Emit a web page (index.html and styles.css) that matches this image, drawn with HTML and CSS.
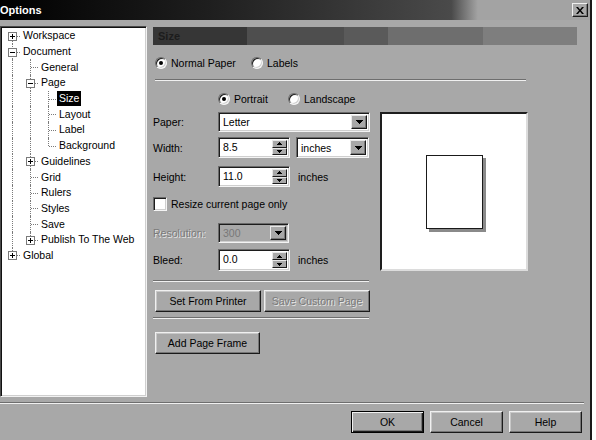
FILE: index.html
```html
<!DOCTYPE html>
<html>
<head>
<meta charset="utf-8">
<title>Options</title>
<link rel="stylesheet" href="styles.css">
</head>
<body>
<div class="window">
  <div class="titlebar">
    <span class="title">Options</span>
    <span class="close"><svg width="8" height="7" viewBox="0 0 8 7"><path d="M0 0h2l2 2.5L6 0h2L5 3.5 8 7H6L4 4.5 2 7H0l3-3.5z" fill="#000"/></svg></span>
  </div>
  <div class="main">
    <div class="tree">
      <div class="row"><span class="g tee first"><svg class="box" viewBox="0 0 9 9"><rect x=".5" y=".5" width="8" height="8" fill="#fff" stroke="#7a7a7a"/><path d="M2 4.5h5M4.5 2v5" stroke="#000"/></svg></span><span class="lbl">Workspace</span></div>
      <div class="row"><span class="g tee"><svg class="box" viewBox="0 0 9 9"><rect x=".5" y=".5" width="8" height="8" fill="#fff" stroke="#7a7a7a"/><path d="M2 4.5h5" stroke="#000"/></svg></span><span class="lbl">Document</span></div>
      <div class="row"><span class="g v"></span><span class="g tee"></span><span class="lbl">General</span></div>
      <div class="row"><span class="g v"></span><span class="g tee"><svg class="box" viewBox="0 0 9 9"><rect x=".5" y=".5" width="8" height="8" fill="#fff" stroke="#7a7a7a"/><path d="M2 4.5h5" stroke="#000"/></svg></span><span class="lbl">Page</span></div>
      <div class="row"><span class="g v"></span><span class="g v"></span><span class="g tee"></span><span class="lbl sel">Size</span></div>
      <div class="row"><span class="g v"></span><span class="g v"></span><span class="g tee"></span><span class="lbl">Layout</span></div>
      <div class="row"><span class="g v"></span><span class="g v"></span><span class="g tee"></span><span class="lbl">Label</span></div>
      <div class="row"><span class="g v"></span><span class="g v"></span><span class="g tee end"></span><span class="lbl">Background</span></div>
      <div class="row"><span class="g v"></span><span class="g tee"><svg class="box" viewBox="0 0 9 9"><rect x=".5" y=".5" width="8" height="8" fill="#fff" stroke="#7a7a7a"/><path d="M2 4.5h5M4.5 2v5" stroke="#000"/></svg></span><span class="lbl">Guidelines</span></div>
      <div class="row"><span class="g v"></span><span class="g tee"></span><span class="lbl">Grid</span></div>
      <div class="row"><span class="g v"></span><span class="g tee"></span><span class="lbl">Rulers</span></div>
      <div class="row"><span class="g v"></span><span class="g tee"></span><span class="lbl">Styles</span></div>
      <div class="row"><span class="g v"></span><span class="g tee"></span><span class="lbl">Save</span></div>
      <div class="row"><span class="g v"></span><span class="g tee end"><svg class="box" viewBox="0 0 9 9"><rect x=".5" y=".5" width="8" height="8" fill="#fff" stroke="#7a7a7a"/><path d="M2 4.5h5M4.5 2v5" stroke="#000"/></svg></span><span class="lbl">Publish To The Web</span></div>
      <div class="row"><span class="g tee end"><svg class="box" viewBox="0 0 9 9"><rect x=".5" y=".5" width="8" height="8" fill="#fff" stroke="#7a7a7a"/><path d="M2 4.5h5M4.5 2v5" stroke="#000"/></svg></span><span class="lbl">Global</span></div>
    </div>

    <div class="page">
      <div class="header">Size</div>

      <div class="radios first-radios">
        <label class="ritem w-normal"><span class="radio on"></span><span class="rtext">Normal Paper</span></label>
        <label class="ritem"><span class="radio"></span><span class="rtext">Labels</span></label>
      </div>
      <div class="hr hr-top"></div>

      <div class="radios orient">
        <label class="ritem w-portrait"><span class="radio on"></span><span class="rtext">Portrait</span></label>
        <label class="ritem"><span class="radio"></span><span class="rtext">Landscape</span></label>
      </div>

      <div class="body">
        <div class="form">
          <div class="frow r-paper">
            <span class="label">Paper:</span>
            <div class="combo c-paper"><span class="ctext">Letter</span><span class="drop"><svg width="7" height="4" viewBox="0 0 7 4"><path d="M0 0h7v1H6v1H5v1H4v1H3V3H2V2H1V1H0z" fill="#000"/></svg></span></div>
          </div>
          <div class="frow r-width">
            <span class="label">Width:</span>
            <div class="spin"><span class="ctext">8.5</span><span class="spinbtns"><span class="sb"><svg width="5" height="3" viewBox="0 0 5 3"><path d="M2 0h1v1h1v1h1v1H0V2h1V1h1z" fill="#000"/></svg></span><span class="sb"><svg width="5" height="3" viewBox="0 0 5 3"><path d="M0 0h5v1H4v1H3v1H2V2H1V1H0z" fill="#000"/></svg></span></span></div>
            <div class="combo c-units"><span class="ctext">inches</span><span class="drop"><svg width="7" height="4" viewBox="0 0 7 4"><path d="M0 0h7v1H6v1H5v1H4v1H3V3H2V2H1V1H0z" fill="#000"/></svg></span></div>
          </div>
          <div class="frow r-height">
            <span class="label">Height:</span>
            <div class="spin"><span class="ctext">11.0</span><span class="spinbtns"><span class="sb"><svg width="5" height="3" viewBox="0 0 5 3"><path d="M2 0h1v1h1v1h1v1H0V2h1V1h1z" fill="#000"/></svg></span><span class="sb"><svg width="5" height="3" viewBox="0 0 5 3"><path d="M0 0h5v1H4v1H3v1H2V2H1V1H0z" fill="#000"/></svg></span></span></div>
            <span class="unit">inches</span>
          </div>
          <label class="frow r-check">
            <span class="checkbox"></span><span class="ctxt">Resize current page only</span>
          </label>
          <div class="frow r-res">
            <span class="label disabled">Resolution:</span>
            <div class="combo c-res off"><span class="ctext">300</span><span class="drop"><svg width="7" height="4" viewBox="0 0 7 4"><path d="M0 0h7v1H6v1H5v1H4v1H3V3H2V2H1V1H0z" fill="#000"/></svg></span></div>
          </div>
          <div class="frow r-bleed">
            <span class="label">Bleed:</span>
            <div class="spin"><span class="ctext">0.0</span><span class="spinbtns"><span class="sb"><svg width="5" height="3" viewBox="0 0 5 3"><path d="M2 0h1v1h1v1h1v1H0V2h1V1h1z" fill="#000"/></svg></span><span class="sb"><svg width="5" height="3" viewBox="0 0 5 3"><path d="M0 0h5v1H4v1H3v1H2V2H1V1H0z" fill="#000"/></svg></span></span></div>
            <span class="unit">inches</span>
          </div>
          <div class="hr hr-form1"></div>
          <div class="frow r-btns">
            <span class="btn b-wide">Set From Printer</span>
            <span class="btn b-wide b-second disabled">Save Custom Page</span>
          </div>
          <div class="hr hr-form2"></div>
          <div class="frow r-frame">
            <span class="btn b-frame">Add Page Frame</span>
          </div>
        </div>
        <div class="preview">
          <div class="sheet"></div>
        </div>
      </div>
    </div>
  </div>
  <div class="hr hr-full"></div>
  <div class="footer">
    <span class="btn b-dlg b-default">OK</span>
    <span class="btn b-dlg">Cancel</span>
    <span class="btn b-dlg">Help</span>
  </div>
</div>
</body>
</html>
```

FILE: styles.css
```css
* { box-sizing: border-box; }
html, body { margin: 0; padding: 0; }
body {
  background: #fff;
  width: 596px;
  height: 440px;
  overflow: hidden;
  font-family: "Liberation Sans", Arial, sans-serif;
  font-size: 10.5px;
  color: #000;
}
.window {
  width: 592px;
  height: 440px;
  background: #a8a8a8;
  border-right: 2px solid #1a1a1a;
  display: flex;
  flex-direction: column;
}

/* title bar */
.titlebar {
  height: 20px;
  flex: none;
  display: flex;
  align-items: center;
  justify-content: space-between;
  padding-right: 2px;
  background: linear-gradient(to right, #000 0%, #1e1e1e 35%, #4a4a4a 76.5%, #a3a3a3 81%, #a3a3a3 100%);
}
.title {
  color: #fff;
  font-weight: bold;
  font-size: 11px;
  margin-left: 0;
}
.close {
  width: 16px;
  height: 14px;
  background: #a8a8a8;
  border: 1px solid;
  border-color: #f0f0f0 #1a1a1a #1a1a1a #f0f0f0;
  box-shadow: inset -1px -1px #777;
  display: flex;
  align-items: center;
  justify-content: center;
}

/* main area */
.main {
  display: flex;
  height: 377px;
  padding-top: 6px;
  flex: none;
}

/* tree */
.tree {
  width: 147px;
  height: 371px;
  flex: none;
  background: #fff;
  border: 1px solid;
  border-color: #4a4a4a #f2f2f2 #f2f2f2 #4a4a4a;
  box-shadow: inset 1px 1px #111, inset -1px -1px #cfcfcf;
  padding: 1px 0 0 2px;
}
.row {
  display: flex;
  height: 15.7px;
}
.g {
  width: 18px;
  flex: none;
  position: relative;
}
.g.v::before,
.g.tee::before {
  content: "";
  position: absolute;
  left: 9px;
  top: 0;
  bottom: 0;
  border-left: 1px dotted #7a7a7a;
}
.g.tee.end::before { bottom: 50%; }
.g.tee.first::before { top: 50%; }
.g.tee::after {
  content: "";
  position: absolute;
  left: 10px;
  right: 1px;
  top: 50%;
  border-top: 1px dotted #7a7a7a;
}
.box {
  position: absolute;
  left: 5px;
  top: 50%;
  margin-top: -4px;
  width: 9px;
  height: 9px;
  z-index: 1;
}
.lbl {
  align-self: center;
  padding: 0 2px;
  line-height: 15px;
  white-space: nowrap;
}
.lbl.sel {
  background: #000;
  color: #fff;
}

/* right page */
.page {
  margin-left: 6px;
  width: 424px;
  display: flex;
  flex-direction: column;
}
.header {
  margin-top: 1px;
  height: 18px;
  flex: none;
  display: flex;
  align-items: center;
  padding-left: 5px;
  font-weight: bold;
  font-size: 11px;
  color: #1c1c1c;
  background: linear-gradient(to right,
    #363636 0%, #363636 22.2%,
    #4e4e4e 22.2%, #4e4e4e 45%,
    #5a5a5a 45%, #5a5a5a 55.4%,
    #6e6e6e 55.4%, #6e6e6e 77.8%,
    #7e7e7e 77.8%, #7e7e7e 100%);
}

.radios {
  display: flex;
  align-items: center;
  height: 14px;
  flex: none;
}
.first-radios { margin-top: 11px; padding-left: 2px; }
.orient { margin-top: 11px; padding-left: 65px; }
.ritem { display: flex; align-items: center; }
.w-normal { width: 96px; }
.w-portrait { width: 70px; }
.radio {
  width: 12px;
  height: 12px;
  border-radius: 50%;
  background: #fff;
  border: 1px solid;
  border-color: #6a6a6a #f4f4f4 #f4f4f4 #6a6a6a;
  box-shadow: inset 1px 1px #1c1c1c, inset -1px -1px #cfcfcf;
  display: flex;
  align-items: center;
  justify-content: center;
}
.radio.on::after {
  content: "";
  width: 4px;
  height: 4px;
  border-radius: 50%;
  background: #000;
}
.rtext { margin-left: 4px; white-space: nowrap; }

.hr {
  height: 2px;
  flex: none;
  border-top: 1px solid #6e6e6e;
  border-bottom: 1px solid #f0f0f0;
}
.hr-top { margin-top: 9px; margin-left: 2px; width: 371px; }

.body { display: flex; }
.form {
  width: 217px;
  flex: none;
  display: flex;
  flex-direction: column;
}
.frow { display: flex; align-items: center; flex: none; }
.label { width: 65px; flex: none; white-space: nowrap; }
.label.disabled, .btn.disabled {
  color: #7a7a7a;
  text-shadow: 1px 1px 0 #e6e6e6;
}
.r-paper { margin-top: 6px; height: 20px; }
.r-width { margin-top: 5px; height: 21px; }
.r-height { margin-top: 8px; height: 21px; }
.r-check { margin-top: 10px; height: 14px; }
.r-res { margin-top: 12px; height: 20px; }
.r-bleed { margin-top: 6px; height: 22px; }
.hr-form1 { margin-top: 9px; width: 216px; }
.r-btns { margin-top: 8px; height: 22px; padding-left: 2px; }
.hr-form2 { margin-top: 5px; width: 216px; }
.r-frame { margin-top: 13px; height: 22px; padding-left: 2px; }

.combo, .spin {
  height: 100%;
  display: flex;
  align-items: stretch;
  background: #fff;
  border: 1px solid;
  border-color: #6a6a6a #f4f4f4 #f4f4f4 #6a6a6a;
  box-shadow: inset 1px 1px #1c1c1c, inset -1px -1px #cfcfcf;
  padding: 2px;
}
.c-paper { width: 152px; }
.c-units { width: 73px; margin-left: 6px; }
.c-res { width: 71px; }
.combo.off { background: #a8a8a8; color: #787878; }
.spin { width: 72px; }
.ctext {
  flex: 1;
  padding-left: 2px;
  display: flex;
  align-items: center;
  white-space: nowrap;
}
.spin .ctext { align-items: flex-start; padding-top: 1px; }
.drop {
  width: 16px;
  flex: none;
  background: #a8a8a8;
  border: 1px solid;
  border-color: #e8e8e8 #1a1a1a #1a1a1a #e8e8e8;
  box-shadow: inset -1px -1px #777;
  display: flex;
  align-items: center;
  justify-content: center;
}
.spinbtns {
  width: 15px;
  flex: none;
  display: flex;
  flex-direction: column;
}
.sb {
  flex: 1;
  background: #a8a8a8;
  border: 1px solid;
  border-color: #e8e8e8 #1a1a1a #1a1a1a #e8e8e8;
  display: flex;
  align-items: center;
  justify-content: center;
}
.unit { margin-left: 8px; }

.checkbox {
  width: 14px;
  height: 14px;
  flex: none;
  background: #fff;
  border: 1px solid;
  border-color: #6a6a6a #f4f4f4 #f4f4f4 #6a6a6a;
  box-shadow: inset 1px 1px #1c1c1c, inset -1px -1px #cfcfcf;
}
.ctxt { margin-left: 4px; white-space: nowrap; }

.btn {
  height: 22px;
  display: flex;
  align-items: center;
  justify-content: center;
  background: #a8a8a8;
  border: 1px solid;
  border-color: #f0f0f0 #1a1a1a #1a1a1a #f0f0f0;
  box-shadow: inset -1px -1px #767676, inset 1px 1px #c8c8c8;
  white-space: nowrap;
}
.b-wide { width: 106px; }
.b-second { margin-left: 3px; }
.b-frame { width: 105px; }

.preview {
  width: 148px;
  height: 159px;
  flex: none;
  margin: 6px 0 0 10px;
  background: #fff;
  border: 2px solid;
  border-color: #1e1e1e #dcdcdc #dcdcdc #1e1e1e;
  display: flex;
  align-items: center;
  justify-content: center;
}
.sheet {
  width: 57px;
  height: 74px;
  background: #fff;
  border: 1px solid #1a1a1a;
  box-shadow: 3px 3px 0 #8a8a8a;
}

.hr-full { margin-top: 5px; width: 584px; }
.footer {
  display: flex;
  justify-content: flex-end;
  gap: 6px;
  padding: 7px 8px 0 0;
}
.b-dlg { width: 73px; }
.b-default {
  border-color: #000;
  box-shadow: inset 1px 1px #f0f0f0, inset -1px -1px #1a1a1a, inset -2px -2px #767676;
}
```
